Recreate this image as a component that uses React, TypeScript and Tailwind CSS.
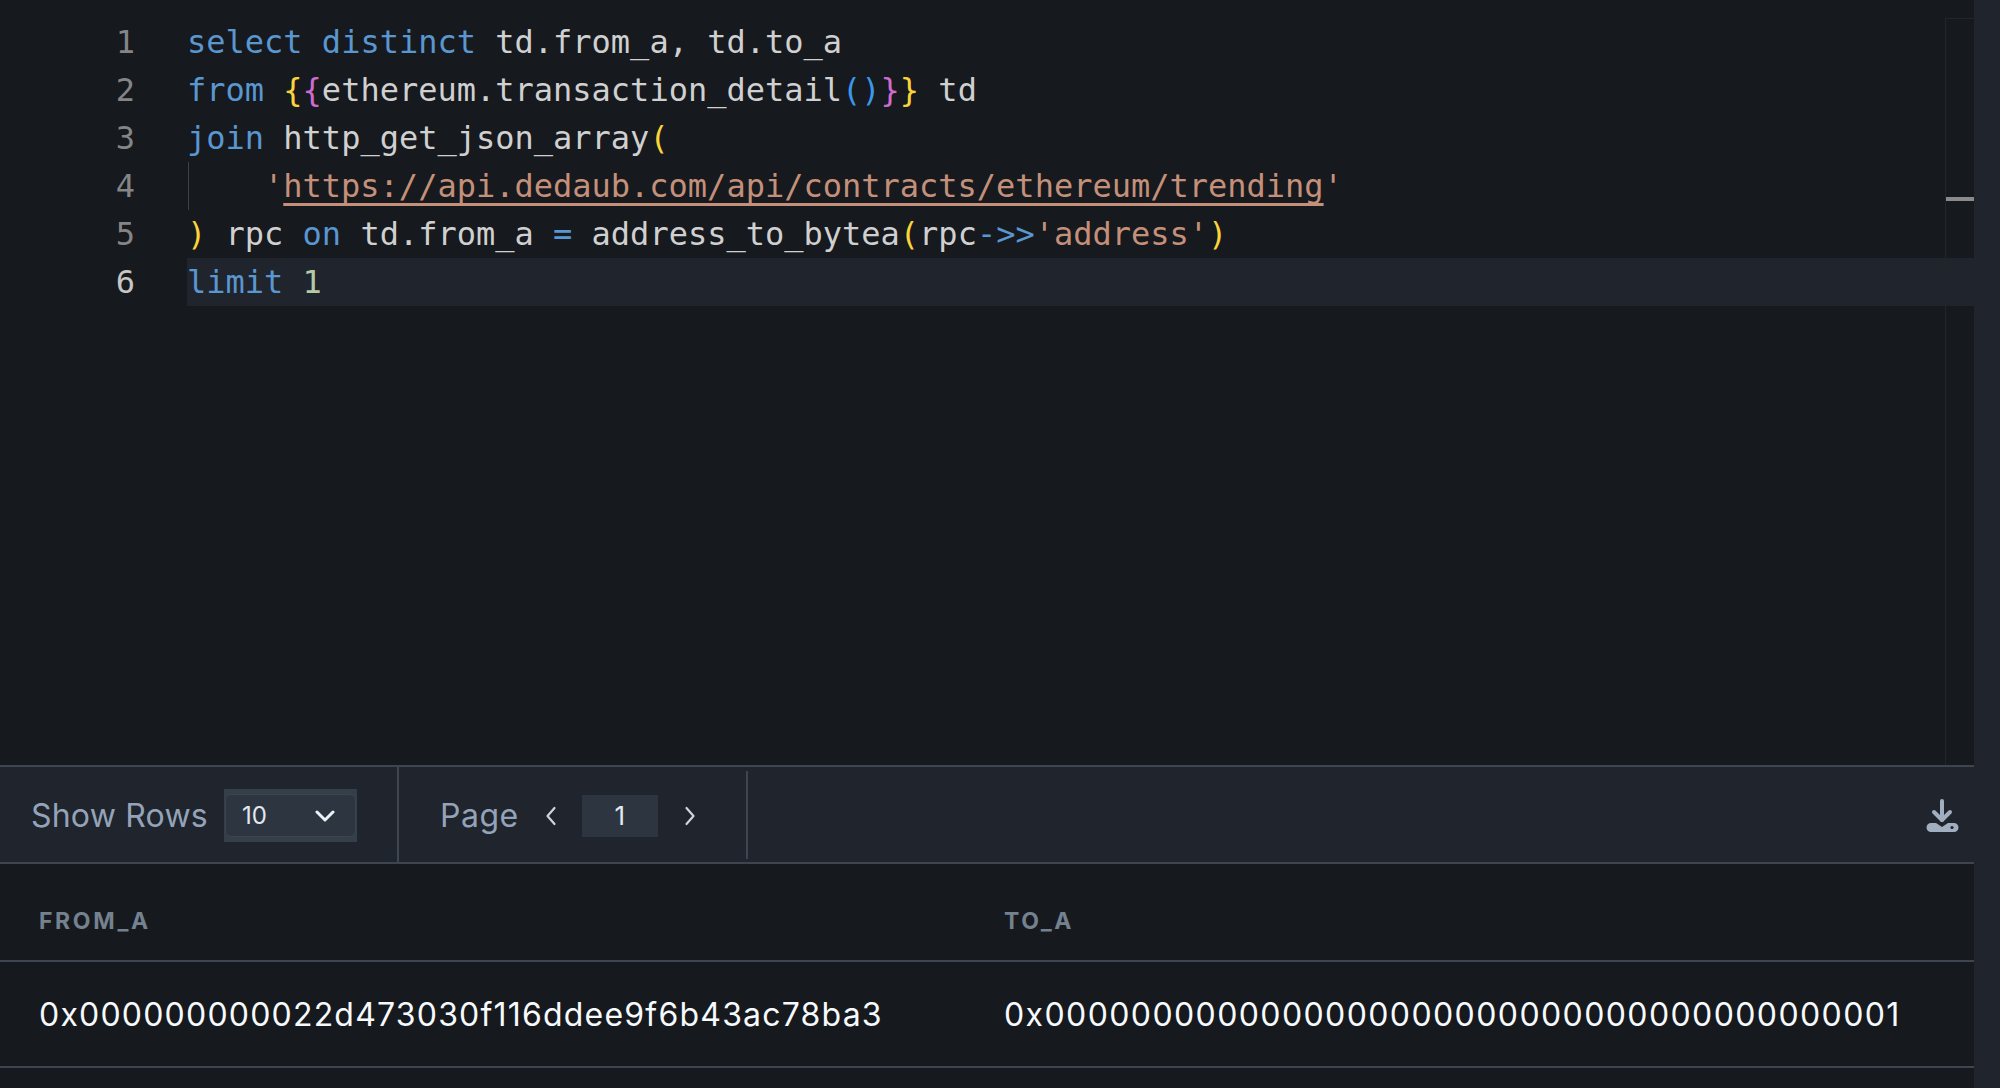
import React from "react";

const K = ({ children }: { children: React.ReactNode }) => <span className="text-[#5a96d0]">{children}</span>;
const S = ({ children }: { children: React.ReactNode }) => <span className="text-[#c59079]">{children}</span>;
const G = ({ children }: { children: React.ReactNode }) => <span className="text-[#fbd43a]">{children}</span>;
const P = ({ children }: { children: React.ReactNode }) => <span className="text-[#cf6bcf]">{children}</span>;
const B = ({ children }: { children: React.ReactNode }) => <span className="text-[#3c97e8]">{children}</span>;

const lines: React.ReactNode[] = [
  <><K>select</K> <K>distinct</K> td.from_a, td.to_a</>,
  <><K>from</K> <G>{"{"}</G><P>{"{"}</P>ethereum.transaction_detail<B>()</B><P>{"}"}</P><G>{"}"}</G> td</>,
  <><K>join</K> http_get_json_array<G>(</G></>,
  <><span className="ml-[1px] inline-block h-[48px] w-[76px] border-l border-[#404040] align-top" /><S>'<span className="underline decoration-[3px] underline-offset-[6px] [text-decoration-skip-ink:none]">https://api.dedaub.com/api/contracts/ethereum/trending</span>'</S></>,
  <><G>)</G> rpc <K>on</K> td.from_a <K>=</K> address_to_bytea<G>(</G>rpc<K>{"->>"}</K><S>'address'</S><G>)</G></>,
  <><K>limit</K> <span className="text-[#b4c9a6]">1</span></>,
];

function Chevron({ dir }: { dir: "left" | "right" }) {
  return (
    <svg width="14" height="22" viewBox="0 0 14 22" fill="none" stroke="#cbd5e0" strokeWidth="2.2" strokeLinecap="round" strokeLinejoin="round">
      <path d={dir === "left" ? "M10.5 3 L3.5 11 L10.5 19" : "M3.5 3 L10.5 11 L3.5 19"} />
    </svg>
  );
}

export default function App() {
  return (
    <div className="flex h-[1088px] w-[2000px] overflow-hidden bg-[#1f242d] font-['Inter',sans-serif]">
      <div className="flex w-[1974px] flex-col bg-[#16191e]">
        {/* Editor */}
        <div className="relative h-[765px] pt-[18px] font-['DejaVu_Sans_Mono',monospace] text-[32px] leading-[48px] text-[#d0d0d0]">
          {lines.map((l, i) => (
            <div key={i} className="flex h-[48px] whitespace-pre">
              <div className={`w-[135px] text-right ${i === 5 ? "text-[#c6c6c6]" : "text-[#858585]"}`}>{i + 1}</div>
              <div className={`ml-[52px] flex-1 ${i === 5 ? "bg-[#1f242d]" : ""}`}>{l}</div>
            </div>
          ))}
          <div className="absolute right-0 top-[18px] bottom-0 w-[29px] border-l border-t border-[#22262c]">
            <div className="mt-[178px] h-[4px] w-full bg-[#8a8a8a]" />
          </div>
        </div>

        {/* Toolbar */}
        <div className="flex h-[99px] items-center border-y-2 border-[#3d4550] bg-[#1f242d] text-[32px] text-[#94a3b8]">
          <div className="flex h-full w-[399px] items-center border-r-2 border-[#3d4550] pl-[31px] pt-[2px]">
            <span className="pt-[1px] tracking-[0.2px]">Show Rows</span>
            <div className="ml-[16px] h-[53px] w-[133px] bg-[#353f4a] px-[1px] py-[5px]">
              <div className="flex h-full items-center justify-between rounded-[6px] border border-[#3a444f] bg-[#2d3640] pl-[16px] pr-[20px] text-[24px] text-[#e2e8f0]">
                <span>10</span>
                <svg width="20" height="12" viewBox="0 0 20 12" fill="none" stroke="#edf2f7" strokeWidth="3" strokeLinecap="round" strokeLinejoin="round">
                  <path d="M2 2 L10 10 L18 2" />
                </svg>
              </div>
            </div>
          </div>
          <div className="flex h-[88px] w-[349px] items-center border-r-2 border-[#3d4550] pl-[41px] pt-[2px]">
            <span className="pt-[1px] tracking-[0.5px]">Page</span>
            <div className="ml-[25px]"><Chevron dir="left" /></div>
            <div className="ml-[24px] flex h-[42px] w-[76px] items-center justify-center bg-[#2d3640] text-[26px] text-[#e2e8f0]">1</div>
            <div className="ml-[25px]"><Chevron dir="right" /></div>
          </div>
          <div className="ml-auto mr-[15px] mt-[3px]">
            <svg width="34" height="34" viewBox="0 0 34 34" fill="none">
              <path d="M17 2 V21" stroke="#a0aec0" strokeWidth="4" strokeLinecap="round" />
              <path d="M9 13 L17 21 L25 13" stroke="#a0aec0" strokeWidth="4" strokeLinecap="round" strokeLinejoin="round" />
              <path d="M8 24 H11 L17 28 L23 24 H29 A4.5 4.5 0 0 1 29 33 H6 A4.5 4.5 0 0 1 6 24 Z" fill="#a0aec0" />
              <circle cx="27" cy="28.5" r="1.6" fill="#1f242d" />
            </svg>
          </div>
        </div>

        {/* Header */}
        <div className="flex h-[98px] items-center border-b-2 border-[#3d4550] pl-[39px] pt-[18px] text-[23px] font-bold tracking-[2.6px] text-[#74818f]">
          <div className="w-[965px]">FROM_A</div>
          <div>TO_A</div>
        </div>

        {/* Row */}
        <div className="flex h-[106px] items-center border-b-2 border-[#3d4550] pl-[39px] pt-[2px] text-[32px] text-[#f7fafc]">
          <div className="w-[965px] tracking-[1.2px]">0x000000000022d473030f116ddee9f6b43ac78ba3</div>
          <div className="tracking-[1.4px]">0x0000000000000000000000000000000000000001</div>
        </div>
      </div>
      <div className="flex-1" />
    </div>
  );
}
